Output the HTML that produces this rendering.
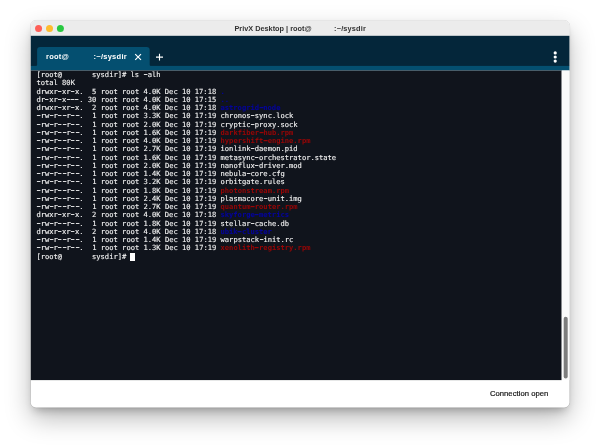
<!DOCTYPE html>
<html lang="en">
<head>
<meta charset="utf-8">
<title>PrivX Desktop</title>
<style>
html,body{margin:0;padding:0;}
body{width:600px;height:448px;background:#fff;position:relative;overflow:hidden;font-family:"Liberation Sans",sans-serif;}
.shadow{position:absolute;left:31px;top:21px;width:538px;height:386px;border-radius:5px;background:#fff;
 box-shadow:0 11px 26px rgba(0,0,0,.28),0 6px 9px -3px rgba(0,0,0,.24);}
svg.chrome{position:absolute;left:0;top:0;}
.txt{position:absolute;left:0;top:0;width:600px;height:448px;will-change:transform;}
.title{position:absolute;top:20.7px;height:15.1px;line-height:15.0px;font-size:7.34px;font-weight:bold;color:#333;white-space:pre;}
.tabt{position:absolute;top:47.4px;line-height:20.6px;font-size:7.5px;letter-spacing:0.26px;font-weight:bold;color:#fff;white-space:pre;}
pre{position:absolute;margin:0;left:36.4px;top:71.1px;font-family:"DejaVu Sans Mono","Liberation Mono",monospace;font-size:7.11px;line-height:8.25px;color:#f4f4f4;-webkit-text-stroke:0.12px currentColor;}
pre i{font-style:normal;display:inline-block;font-size:8.8px;line-height:0;margin:0 -0.509px;transform:scaleX(1.45);-webkit-text-stroke:0.05px currentColor;}
pre b.d{color:#050598;-webkit-text-stroke:0.12px #050598;}
pre b.r{color:#9a0505;-webkit-text-stroke:0;}
.cursor{display:inline-block;margin-left:-0.3px;width:4.7px;height:8.1px;background:#fff;vertical-align:top;}
.status{position:absolute;right:51.6px;top:378.9px;line-height:29.4px;font-size:7.65px;letter-spacing:0.05px;color:#141414;-webkit-text-stroke:0.2px #141414;white-space:pre;}
</style>
</head>
<body>
<div class="shadow"></div>
<svg class="chrome" width="600" height="448" viewBox="0 0 600 448">
 <defs><clipPath id="wc"><rect x="30.85" y="20.7" width="538.55" height="386.7" rx="5.1" ry="5.1"/></clipPath></defs>
 <rect x="30.6" y="20.45" width="539.05" height="387.2" rx="5.35" ry="5.35" fill="none" stroke="#000" stroke-opacity="0.2" stroke-width="0.5"/>
 <g clip-path="url(#wc)">
  <rect x="30" y="20" width="541" height="388" fill="#ffffff"/>
  <rect x="30" y="20" width="541" height="15.8" fill="#ececec"/>
  <rect x="30" y="35.8" width="541" height="30.2" fill="#04263a"/>
  <rect x="30" y="65.9" width="541" height="4.6" fill="#044f70"/>
  <path d="M35.9 66 Q37.1 66 37.1 64.8 V50.1 Q37.1 46.9 40.3 46.9 H146.5 Q149.7 46.9 149.7 50.1 V64.8 Q149.7 66 150.9 66 Z" fill="#044f70"/>
  <rect x="30" y="70.5" width="531.7" height="309.6" fill="#10141c"/>
  <rect x="561.7" y="70.5" width="9" height="309.6" fill="#fafafa"/>
  <rect x="563.7" y="316.7" width="4" height="61.7" rx="2" ry="2" fill="#7d7d7d"/>
 </g>
 <circle cx="38.55" cy="28.5" r="3.5" fill="#fe5f57"/>
 <circle cx="49.5" cy="28.5" r="3.5" fill="#febc2e"/>
 <circle cx="60.4" cy="28.5" r="3.5" fill="#28c840"/>
 <path d="M135.2 54.05L141.0 59.85M141.0 54.05L135.2 59.85" stroke="#fff" stroke-width="1.15" fill="none"/>
 <path d="M159.5 53.7V60.6M156.0 57.15H163.0" stroke="#fff" stroke-width="1.1" fill="none"/>
 <circle cx="555.2" cy="52.9" r="1.6" fill="#fff"/><circle cx="555.2" cy="57.0" r="1.6" fill="#fff"/><circle cx="555.2" cy="61.1" r="1.6" fill="#fff"/>
</svg>
<div class="txt">
 <div class="title" style="left:234.4px">PrivX Desktop | root@</div>
 <div class="title" style="left:334.1px;letter-spacing:0.17px">:~/sysdir</div>
 <div class="tabt" style="left:46px">root@</div>
 <div class="tabt" style="left:93.5px">:~/sysdir</div>
 <pre>[root@       sysdir]# ls <i>-</i>alh
total 80K
drwxr<i>-</i>xr<i>-</i>x.  5 root root 4.0K Dec 10 17:18 <b class="d">.</b>
dr<i>-</i>xr<i>-</i>x<i>-</i><i>-</i><i>-</i>. 30 root root 4.0K Dec 10 17:15 <b class="d">..</b>
drwxr<i>-</i>xr<i>-</i>x.  2 root root 4.0K Dec 10 17:18 <b class="d">astrogrid<i>-</i>node</b>
<i>-</i>rw<i>-</i>r<i>-</i><i>-</i>r<i>-</i><i>-</i>.  1 root root 3.3K Dec 10 17:19 chronos<i>-</i>sync.lock
<i>-</i>rw<i>-</i>r<i>-</i><i>-</i>r<i>-</i><i>-</i>.  1 root root 2.0K Dec 10 17:19 cryptic<i>-</i>proxy.sock
<i>-</i>rw<i>-</i>r<i>-</i><i>-</i>r<i>-</i><i>-</i>.  1 root root 1.6K Dec 10 17:19 <b class="r">darkfiber<i>-</i>hub.rpm</b>
<i>-</i>rw<i>-</i>r<i>-</i><i>-</i>r<i>-</i><i>-</i>.  1 root root 4.0K Dec 10 17:19 <b class="r">hypershift<i>-</i>engine.rpm</b>
<i>-</i>rw<i>-</i>r<i>-</i><i>-</i>r<i>-</i><i>-</i>.  1 root root 2.7K Dec 10 17:19 ionlink<i>-</i>daemon.pid
<i>-</i>rw<i>-</i>r<i>-</i><i>-</i>r<i>-</i><i>-</i>.  1 root root 1.6K Dec 10 17:19 metasync<i>-</i>orchestrator.state
<i>-</i>rw<i>-</i>r<i>-</i><i>-</i>r<i>-</i><i>-</i>.  1 root root 2.0K Dec 10 17:19 nanoflux<i>-</i>driver.mod
<i>-</i>rw<i>-</i>r<i>-</i><i>-</i>r<i>-</i><i>-</i>.  1 root root 1.4K Dec 10 17:19 nebula<i>-</i>core.cfg
<i>-</i>rw<i>-</i>r<i>-</i><i>-</i>r<i>-</i><i>-</i>.  1 root root 3.2K Dec 10 17:19 orbitgate.rules
<i>-</i>rw<i>-</i>r<i>-</i><i>-</i>r<i>-</i><i>-</i>.  1 root root 1.8K Dec 10 17:19 <b class="r">photonstream.rpm</b>
<i>-</i>rw<i>-</i>r<i>-</i><i>-</i>r<i>-</i><i>-</i>.  1 root root 2.4K Dec 10 17:19 plasmacore<i>-</i>unit.img
<i>-</i>rw<i>-</i>r<i>-</i><i>-</i>r<i>-</i><i>-</i>.  1 root root 2.7K Dec 10 17:19 <b class="r">quantum<i>-</i>router.rpm</b>
drwxr<i>-</i>xr<i>-</i>x.  2 root root 4.0K Dec 10 17:18 <b class="d">skyforge<i>-</i>metrics</b>
<i>-</i>rw<i>-</i>r<i>-</i><i>-</i>r<i>-</i><i>-</i>.  1 root root 1.8K Dec 10 17:19 stellar<i>-</i>cache.db
drwxr<i>-</i>xr<i>-</i>x.  2 root root 4.0K Dec 10 17:18 <b class="d">ubik<i>-</i>cluster</b>
<i>-</i>rw<i>-</i>r<i>-</i><i>-</i>r<i>-</i><i>-</i>.  1 root root 1.4K Dec 10 17:19 warpstack<i>-</i>init.rc
<i>-</i>rw<i>-</i>r<i>-</i><i>-</i>r<i>-</i><i>-</i>.  1 root root 1.3K Dec 10 17:19 <b class="r">xenolith<i>-</i>registry.rpm</b>
[root@       sysdir]# <span class="cursor"></span></pre>
 <div class="status">Connection open</div>
</div>
</body>
</html>
